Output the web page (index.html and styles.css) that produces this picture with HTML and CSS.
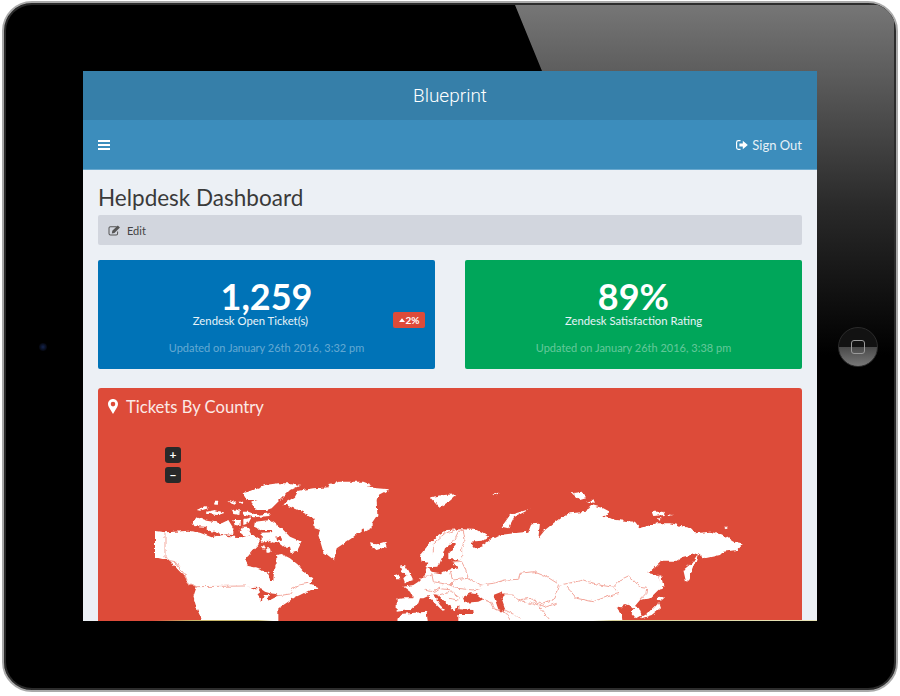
FILE: index.html
```html
<!DOCTYPE html>
<html lang="en">
<head>
    <meta charset="UTF-8">
    <title>Blueprint</title>
    <link rel="stylesheet" href="styles.css">
</head>
<body>
    <div class="tablet">
        <div class="glare"></div>
        <div class="camera"></div>
        <div class="homeBtn"><span class="homeSquare"></span></div>
        <div class="screen">
            <div class="brand">Blueprint</div>
            <div class="navBar">
                <svg class="icoBars" viewBox="0 0 12 10"><path d="M0 0h12v2H0zM0 4h12v2H0zM0 8h12v2H0z"/></svg>
                <a class="signOut">
                    <svg class="icoOut" viewBox="0 0 12 10"><path d="M4.5 0.7H2.4C1.2 0.7.6 1.5.6 2.5v5c0 1 .6 1.8 1.8 1.8h2.1" fill="none" stroke="#fff" stroke-width="1.2"/><path d="M3.4 3.4h3.4V.8L11.8 5 6.8 9.2V6.6H3.4z"/></svg>
                    Sign Out
                </a>
            </div>
            <div class="content">
                <h1 class="pageTitle">Helpdesk Dashboard</h1>
                <div class="toolBar">
                    <svg class="icoEdit" viewBox="0 0 14 12"><path d="M9.500 1.800H2.600C1.600 1.800 1 2.400 1 3.400v6c0 1 .6 1.600 1.600 1.600h6.200c1 0 1.600-.6 1.600-1.600V7" fill="none" stroke="#555" stroke-width="1.100"/><path d="M4.600 6.400 10.600.6l2.300 2.200-6 5.900-2.800.5z" fill="#555"/></svg>
                    <span>Edit</span>
                </div>
                <div class="stats">
                    <div class="stat blue">
                        <div class="num">1,259</div>
                        <div class="label withBadge">Zendesk Open Ticket(s)</div>
                        <div class="updated">Updated on January 26th 2016, 3:32 pm</div>
                        <span class="badge"><svg viewBox="0 0 8 5"><path d="M0 5 4 0l4 5z"/></svg>2%</span>
                    </div>
                    <div class="stat green">
                        <div class="num">89%</div>
                        <div class="label">Zendesk Satisfaction Rating</div>
                        <div class="updated">Updated on January 26th 2016, 3:38 pm</div>
                    </div>
                </div>
                <div class="mapCard">
                    <div class="mapTitle">
                        <svg class="icoPin" viewBox="0 0 10 15"><path fill-rule="evenodd" d="M5 0C2.200 0 0 2.200 0 5c0 1.200.3 2 .8 3L5 15l4.200-7c.5-1 .8-1.800.8-3 0-2.800-2.200-5-5-5zm0 2.800A2.300 2.300 0 1 1 5 7.400 2.300 2.300 0 0 1 5 2.800z"/></svg>
                        Tickets By Country
                    </div>
                    <div class="mapArea">
                        <div class="zoomBtns">
                            <span class="zoomBtn">+</span>
                            <span class="zoomBtn">−</span>
                        </div>
                        <svg class="worldMap" viewBox="98 426 704 195">
                            <defs>
                                <filter id="rough" filterUnits="userSpaceOnUse" x="98" y="426" width="704" height="200">
                                    <feTurbulence type="fractalNoise" baseFrequency="0.22" numOctaves="2" seed="4"/>
                                    <feDisplacementMap in="SourceGraphic" scale="4" xChannelSelector="R" yChannelSelector="G"/>
                                </filter>
                            </defs>
                            <g filter="url(#rough)">
                            <!-- north america, greenland -->
                            <g transform="translate(150 480) scale(.33333)">
                                <path class="land" d="M15 153 45 157 75 155 115 152 150 158 185 172 215 165 250 170 280 172 310 165 330 180 325 195 305 215 285 240 295 258 330 265 355 280 360 300 370 300 372 270 380 250 378 225 395 222 420 235 445 255 465 280 490 295 478 312 495 315 505 330 480 330 450 345 435 352 400 375 385 385 385 440 165 440 140 385 130 350 140 320 115 310 105 290 85 270 60 242 15 232z"/>
                                <path class="hole" d="M283 316 300 322 320 320 330 335 322 345 335 362 342 345 360 345 352 362 365 358 385 347 378 342 360 340 345 335 330 325 310 325z"/>
                                <path class="border" d="M45 157 45 232 60 242 75 245 105 285 115 310 140 320 285 318M380 348 420 342 430 325 445 315 475 310"/>
                                <path class="land" d="M125 130 140 112 170 122 215 130 235 120 250 145 250 165 210 162 175 150 165 140 130 138z"/>
                                <path class="land" d="M140 90 165 78 175 85 150 92zM170 95 195 90 225 98 205 105 175 102zM245 90 270 88 268 105 250 102zM235 60 255 65 260 72 245 68zM265 65 280 65 278 72zM195 65 205 65 203 75 192 72zM275 95 295 95 320 105 360 100 362 108 310 112 285 105zM250 120 272 120 272 138 255 135zM280 118 305 112 295 130 280 135zM275 140 290 140 305 165 285 170 268 155z"/>
                                <path class="land" d="M315 125 360 120 395 145 420 170 455 185 440 215 425 220 420 200 400 200 375 180 365 150 335 150 312 140z"/>
                                <path class="land" d="M335 158 385 155 400 180 380 190 355 182 335 185z"/>
                                <path class="hole" d="M378 170 392 168 396 182 382 184z"/>
                                <path class="land" d="M332 198 345 200 342 210zM348 205 360 205 362 215 350 215z"/>
                                <path class="land" d="M278 40 305 32 345 15 385 10 425 10 450 15 420 30 395 55 365 85 350 90 320 90 300 65 320 60 290 60z"/>
                                <path class="land" d="M400 72 435 50 445 32 490 25 540 22 535 12 570 5 640 5 665 15 650 22 718 28 685 45 680 60 682 105 665 130 665 145 645 155 640 145 605 175 560 205 552 240 520 215 505 165 510 150 495 145 490 115 455 95z"/>
                                <path class="land" d="M660 190 680 193 705 185 710 200 680 210 665 205z"/>
                            </g>
                            <!-- eurasia -->
                            <g transform="translate(380 460) scale(.33333)">
                                <path class="land" d="M245 208 290 210 325 230 305 242 270 245 285 265 310 255 330 240 360 225 415 218 445 215 455 190 480 188 475 235 495 210 520 190 540 175 570 160 620 155 635 135 670 145 690 155 670 170 710 180 765 185 780 205 830 190 870 190 930 205 945 220 990 215 1030 225 1060 245 1088 250 1070 270 1030 275 1020 285 975 295 955 280 910 290 885 305 840 305 805 340 835 345 845 385 835 390 810 415 780 420 765 438 777 445 785 465 768 475 755 460 762 442 735 432 725 445 710 442 725 465 730 505 285 505 280 450 235 448 235 435 220 455 208 438 195 425 175 405 160 402 180 435 195 450 188 452 160 425 145 408 130 415 120 415 115 430 90 450 50 455 50 417 72 415 100 415 90 395 70 380 100 375 115 365 135 345 140 320 145 308 125 305 120 285 145 255 170 230 200 210z"/>
                                <path class="hole" d="M142 322 175 320 185 295 195 265 215 250 228 252 205 280 205 298 243 298 220 308 235 325 205 330 180 340 155 335z"/>
                                <path class="hole" d="M248 412 270 400 290 402 310 418 295 425 255 428z"/>
                                <path class="hole" d="M340 405 365 395 375 405 365 415 375 445 370 458 355 448z"/>
                                <path class="land" d="M955 280 945 310 925 360 918 365 910 330 935 310z"/>
                                <path class="land" d="M838 345 845 350 850 380 842 390 838 370z"/>
                                <path class="land" d="M835 410 855 412 840 425 830 420zM835 430 840 445 815 465 785 475 780 472 810 455 825 440z"/>
                                <path class="land" d="M60 320 75 315 85 330 100 360 75 368 70 355 80 345 65 335zM45 345 60 340 58 358 45 358z"/>
                                <path class="land" d="M60 462 140 455 145 505 50 505zM235 462 285 462 285 505 235 505z"/>
                                <path class="land" d="M150 112 190 105 232 103 210 122 178 143z"/>
                                <path class="land" d="M365 200 390 165 452 146 402 172 385 205z"/>
                                <path class="land" d="M340 100 360 98 350 106zM575 100 605 95 618 115 600 120zM618 125 640 118 645 128zM815 155 850 155 855 165 820 168zM860 162 880 165 865 168zM830 175 845 175 835 182zM1032 200 1045 200 1038 205z"/>
                                <path class="border" d="M340 370 375 360 415 358 420 340 460 335 500 350 540 375 565 370 610 360 625 365 660 375 700 382 720 360 745 348 765 365 780 382 800 385 798 400 780 420M560 380 590 415 640 425 680 410 720 400 705 388"/>
                            </g>
                            <!-- europe and middle east borders -->
                            <g transform="translate(390 520) scale(.33333)">
                                <path class="border" d="M130 100 130 70 165 40 195 30M190 65 205 35 220 30 225 60 215 85 215 115M185 125 215 125 225 145 235 175 270 195 310 190M125 160 130 185 180 195 190 185 180 150M190 180 235 175M180 195 200 205 250 210 275 205M85 185 100 170 130 165M100 210 130 215 145 205 185 210M145 225 185 215 210 235M175 235 205 240M280 238 300 245 310 265 350 280 360 300M345 225 370 225 385 240 420 235 460 250 495 235 505 195M345 270 385 290 395 300M385 240 420 250 445 258 480 300M430 245 470 260 500 250"/>
                            </g>
                            </g>
                        </svg>
                    </div>
                </div>
            </div>
            <div class="screenEdge"></div>
        </div>
    </div>
</body>
</html>
```

FILE: styles.css
```css
* {
    margin: 0;
    padding: 0;
    box-sizing: border-box;
}

body {
    background: #fff;
    font-family: "Lato", "Noto Sans", sans-serif;
}

.tablet {
    position: relative;
    width: 896px;
    height: 691px;
    margin: 1px 2px 0;
    padding: 68px 78px 0 79px;
    background: #000;
    border: 2px solid #aaa;
    border-radius: 30px;
    box-shadow: inset 0 0 0 2px #2c2c2c;
    overflow: hidden;
}

/* the reflection over the bezel */
.glare {
    position: absolute;
    top: 2px;
    left: 0;
    right: 2px;
    height: 400px;
    background: linear-gradient(#767676, #5c5c5c 70px, #2a2a2a 200px, #000 350px);
    clip-path: polygon(511px 0, 100% 0, 100% 100%, 813px 100%, 813px 66px, 538px 66px);
}

.camera {
    position: absolute;
    left: 35px;
    top: 340px;
    width: 8px;
    height: 8px;
    border-radius: 50%;
    background: radial-gradient(#14244e, #05070f 70%, #000);
}

.homeBtn {
    position: absolute;
    left: 834px;
    top: 324px;
    width: 40px;
    height: 40px;
    border-radius: 50%;
    border: 1px solid #2b2b2b;
    background: linear-gradient(#121212 50%, #4a4a4a 51%, #787878);
    display: flex;
    align-items: center;
    justify-content: center;
}

.homeSquare {
    width: 14px;
    height: 14px;
    border: 1.5px solid #9a9a9a;
    border-radius: 3px;
}

.screen {
    position: relative;
    z-index: 1;
    width: 734px;
    height: 550px;
    background: #ecf0f5;
    overflow: hidden;
}

.screenEdge {
    position: absolute;
    left: 0;
    right: 0;
    bottom: 0;
    height: 1px;
    background: linear-gradient(90deg, transparent 70px, #c9b96c 110px, #c9b96c 175px, transparent 190px, transparent 510px, #d8d29a 530px, #e8e4b8 100%);
}

.brand {
    height: 49px;
    background: #367fa9;
    color: #fff;
    font-family: "Roboto", sans-serif;
    font-weight: 300;
    font-size: 19px;
    line-height: 50px;
    text-align: center;
}

.navBar {
    height: 50px;
    padding: 0 15px;
    background: #3c8dbc;
    border-bottom: 1px solid #6aa9cf;
    color: #fff;
    display: flex;
    align-items: center;
    justify-content: space-between;
}

.icoBars {
    width: 12px;
    height: 10px;
    fill: #fff;
}

.signOut {
    display: flex;
    align-items: center;
    gap: 4px;
    font-size: 13px;
    color: #e6f1f7;
}

.icoOut {
    width: 12px;
    height: 10px;
    fill: #fff;
}

.content {
    padding: 12px 15px 0;
}

.pageTitle {
    height: 33px;
    font-size: 22.5px;
    font-weight: 400;
    line-height: 32px;
    color: #3a3a3a;
}

.toolBar {
    height: 30px;
    padding-left: 10px;
    background: #d2d6de;
    border-radius: 2px;
    display: flex;
    align-items: center;
    gap: 6px;
    font-size: 11px;
    color: #444;
}

.icoEdit {
    width: 13px;
    height: 11px;
}

.stats {
    display: grid;
    grid-template-columns: 1fr 1fr;
    gap: 30px;
    margin: 15px 0 19px;
}

.stat {
    position: relative;
    height: 109px;
    padding-top: 18px;
    border-radius: 2px;
    color: #fff;
    text-align: center;
}

.stat.blue {
    background: #0073b7;
}

.stat.green {
    background: #00a65a;
}

.stat .num {
    font-size: 36px;
    font-weight: 700;
    line-height: 36px;
}

.stat .label {
    font-size: 11.3px;
    line-height: 14px;
    color: #e8f3f9;
}

/* the badge takes room from the line in the original */
.stat .label.withBadge {
    padding-right: 32px;
}

.stat .updated {
    margin-top: 13px;
    font-size: 11px;
    line-height: 14px;
    color: rgba(255, 255, 255, .4);
}

.badge {
    position: absolute;
    right: 10px;
    top: 52px;
    width: 32px;
    height: 16px;
    background: #dd4b39;
    border-radius: 2px;
    font-size: 10px;
    font-weight: 700;
    line-height: 16px;
    display: flex;
    align-items: center;
    justify-content: center;
    gap: 1px;
}

.badge svg {
    width: 6px;
    height: 4px;
    fill: #fff;
}

.mapCard {
    height: 260px;
    background: #dd4b39;
    border-radius: 3px;
    color: #fff;
}

.mapTitle {
    height: 38px;
    padding: 0 0 1px 10px;
    display: flex;
    align-items: center;
    gap: 8px;
    font-size: 16.6px;
    color: #fbe9e6;
}

.icoPin {
    width: 10px;
    height: 15px;
    fill: #fff;
}

.mapArea {
    position: relative;
}

.zoomBtns {
    position: absolute;
    z-index: 1;
    left: 67px;
    top: 21px;
    display: flex;
    flex-direction: column;
    gap: 4px;
}

.zoomBtn {
    width: 16px;
    height: 16px;
    background: #292929;
    border-radius: 3px;
    color: #fff;
    font-size: 12px;
    font-weight: 700;
    line-height: 16px;
    text-align: center;
}

.worldMap {
    display: block;
    width: 704px;
    height: 195px;
}

.land {
    fill: #fff;
}

.hole {
    fill: #dd4b39;
}

.border {
    fill: none;
    stroke: #f2a79c;
    stroke-width: 3;
}
```
